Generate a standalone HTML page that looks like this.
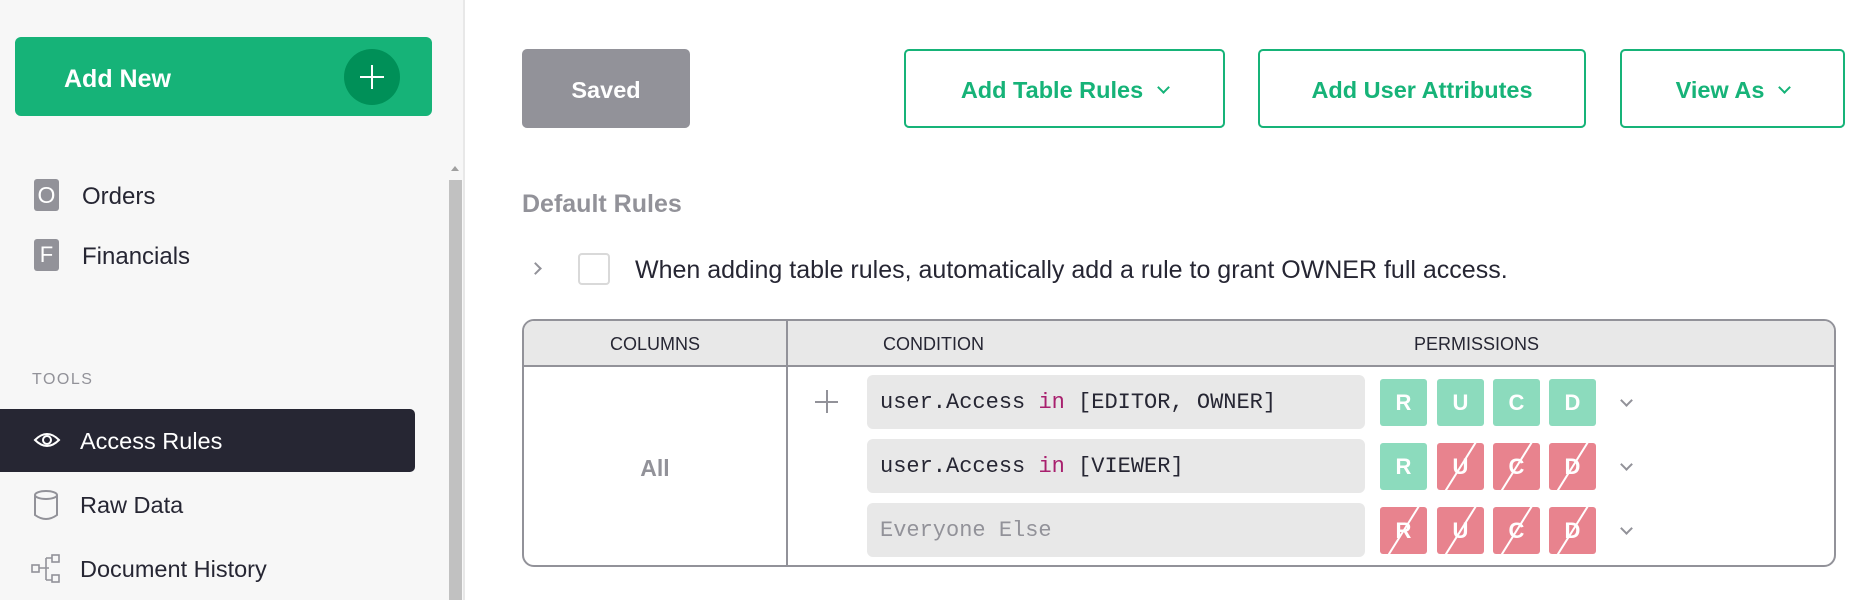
<!DOCTYPE html>
<html><head><style>
*{box-sizing:border-box;margin:0;padding:0}
body{width:1857px;height:600px;overflow:hidden;background:#fff;font-family:"Liberation Sans",sans-serif;color:#262633;position:relative}
.abs{position:absolute}
.side{left:0;top:0;width:465px;height:600px;background:#f7f7f7;border-right:2px solid #e8e8e8}
.btn{position:absolute;top:49px;height:79px;border-radius:5px;display:flex;align-items:center;justify-content:center;font-size:23.5px;font-weight:bold;padding-top:4px}
.ob{border:2px solid #16b378;color:#16b378;background:#fff}
.chev{display:inline-block;width:9px;height:9px;border-right:2px solid currentColor;border-bottom:2px solid currentColor;transform:rotate(45deg);margin-left:16px;margin-top:-6px}
.cond{position:absolute;left:867px;width:498px;height:54px;background:#e8e8e8;border-radius:6px;font-family:"Liberation Mono",monospace;font-size:22px;display:flex;align-items:center;padding-left:13px}
.p{position:absolute;width:47px;height:47px;border-radius:3px;color:#fff;font-size:22px;font-weight:bold;display:flex;align-items:center;justify-content:center;overflow:hidden}
.g{background:#8cdbbd}.r{background:#e8838e}
.r::after{content:"";position:absolute;left:-6px;top:22px;width:60px;height:2px;background:#fff;transform:rotate(-58deg)}
.dd{position:absolute;left:1622px;width:9px;height:9px;border-right:2px solid #929299;border-bottom:2px solid #929299;transform:rotate(45deg)}
.kw{color:#a8206e}
.st{font-size:24px}
</style></head><body>
<div class="abs side"></div>
<div class="abs" style="left:15px;top:37px;width:417px;height:79px;background:#16b378;border-radius:6px"></div>
<div class="abs" style="left:64px;top:65px;color:#fff;font-size:25px;font-weight:bold">Add New</div>
<div class="abs" style="left:344px;top:49px;width:56px;height:56px;border-radius:50%;background:#009058"></div>
<div class="abs" style="left:371px;top:65px;width:2px;height:24px;background:#fff"></div>
<div class="abs" style="left:360px;top:76px;width:24px;height:2px;background:#fff"></div>
<div class="abs" style="left:449px;top:180px;width:13px;height:420px;background:#c1c1c1"></div>
<div class="abs" style="left:451px;top:166px;border:4px solid transparent;border-bottom:5px solid #a0a0a0;border-top:0"></div>
<div class="abs" style="left:34px;top:179px;width:25px;height:32px;background:#929299;border-radius:3px;color:#fff;font-size:23px;text-align:center;line-height:32px">O</div>
<div class="abs st" style="left:82px;top:183px">Orders</div>
<div class="abs" style="left:34px;top:239px;width:25px;height:32px;background:#929299;border-radius:3px;color:#fff;font-size:22px;text-align:center;line-height:32px">F</div>
<div class="abs st" style="left:82px;top:243px">Financials</div>
<div class="abs" style="left:32px;top:371px;font-size:16px;color:#929299;letter-spacing:1.5px">TOOLS</div>
<div class="abs" style="left:0;top:409px;width:415px;height:63px;background:#262633;border-radius:0 5px 5px 0"></div>
<svg class="abs" style="left:33px;top:428px" width="28" height="24" viewBox="0 0 28 24"><path d="M2 12 Q14 0 26 12 Q14 24 2 12Z" fill="none" stroke="#fff" stroke-width="2"/><circle cx="14" cy="12" r="4" fill="none" stroke="#fff" stroke-width="2"/></svg>
<div class="abs" style="left:80px;top:428px;font-size:23.5px;color:#fff">Access Rules</div>
<svg class="abs" style="left:33px;top:489px" width="26" height="32" viewBox="0 0 26 32"><ellipse cx="13" cy="6" rx="11" ry="4" fill="none" stroke="#929299" stroke-width="2"/><path d="M2 6 V26 Q13 34 24 26 V6" fill="none" stroke="#929299" stroke-width="2"/></svg>
<div class="abs" style="left:80px;top:492px;font-size:23.5px">Raw Data</div>
<svg class="abs" style="left:30px;top:553px" width="32" height="32" viewBox="0 0 32 32" fill="none" stroke="#929299" stroke-width="1.6"><rect x="2" y="12" width="7" height="7"/><rect x="22" y="2" width="7" height="7"/><rect x="22" y="22" width="7" height="7"/><path d="M9 15 H16 M16 5 V27 M16 5 H22 M16 27 H22 M16 15 H19"/></svg>
<div class="abs" style="left:80px;top:556px;font-size:23.5px">Document History</div>

<div class="btn" style="left:522px;width:168px;background:#929299;color:#fff">Saved</div>
<div class="btn ob" style="left:904px;width:321px">Add Table Rules<span class="chev"></span></div>
<div class="btn ob" style="left:1258px;width:328px">Add User Attributes</div>
<div class="btn ob" style="left:1620px;width:225px">View As<span class="chev"></span></div>

<div class="abs" style="left:522px;top:190px;font-size:25px;font-weight:bold;color:#929299">Default Rules</div>
<div class="abs" style="left:531px;top:264px;width:9px;height:9px;border-right:2px solid #929299;border-top:2px solid #929299;transform:rotate(45deg)"></div>
<div class="abs" style="left:578px;top:253px;width:32px;height:32px;border:2px solid #d9d9d9;border-radius:4px;background:#fff"></div>
<div class="abs" style="left:635px;top:256px;font-size:25px">When adding table rules, automatically add a rule to grant OWNER full access.</div>

<div class="abs" style="left:522px;top:319px;width:1314px;height:248px;border:2px solid #929299;border-radius:12px;overflow:hidden">
 <div class="abs" style="left:0;top:0;width:100%;height:46px;background:#e8e8e8;border-bottom:2px solid #929299"></div>
 <div class="abs" style="left:262px;top:0;width:2px;height:100%;background:#929299"></div>
 <div class="abs" style="left:0;top:13px;width:262px;text-align:center;font-size:18px">COLUMNS</div>
 <div class="abs" style="left:359px;top:13px;font-size:18px">CONDITION</div>
 <div class="abs" style="left:890px;top:13px;font-size:18px">PERMISSIONS</div>
 <div class="abs" style="left:0;top:134px;width:262px;text-align:center;font-size:23px;font-weight:bold;color:#929299">All</div>
</div>
<div class="abs" style="left:815px;top:401px;width:23px;height:1.5px;background:#929299"></div>
<div class="abs" style="left:826px;top:390px;width:1.5px;height:23px;background:#929299"></div>
<div class="cond" style="top:375px">user.Access&nbsp;<span class="kw">in</span>&nbsp;[EDITOR, OWNER]</div>
<div class="cond" style="top:439px">user.Access&nbsp;<span class="kw">in</span>&nbsp;[VIEWER]</div>
<div class="cond" style="top:503px;color:#929299">Everyone Else</div>

<div class="p g" style="left:1380px;top:379px">R</div><div class="p g" style="left:1437px;top:379px">U</div><div class="p g" style="left:1493px;top:379px">C</div><div class="p g" style="left:1549px;top:379px">D</div>
<div class="p g" style="left:1380px;top:443px">R</div><div class="p r" style="left:1437px;top:443px">U</div><div class="p r" style="left:1493px;top:443px">C</div><div class="p r" style="left:1549px;top:443px">D</div>
<div class="p r" style="left:1380px;top:507px">R</div><div class="p r" style="left:1437px;top:507px">U</div><div class="p r" style="left:1493px;top:507px">C</div><div class="p r" style="left:1549px;top:507px">D</div>
<div class="dd" style="top:396px"></div><div class="dd" style="top:460px"></div><div class="dd" style="top:524px"></div>
</body></html>
